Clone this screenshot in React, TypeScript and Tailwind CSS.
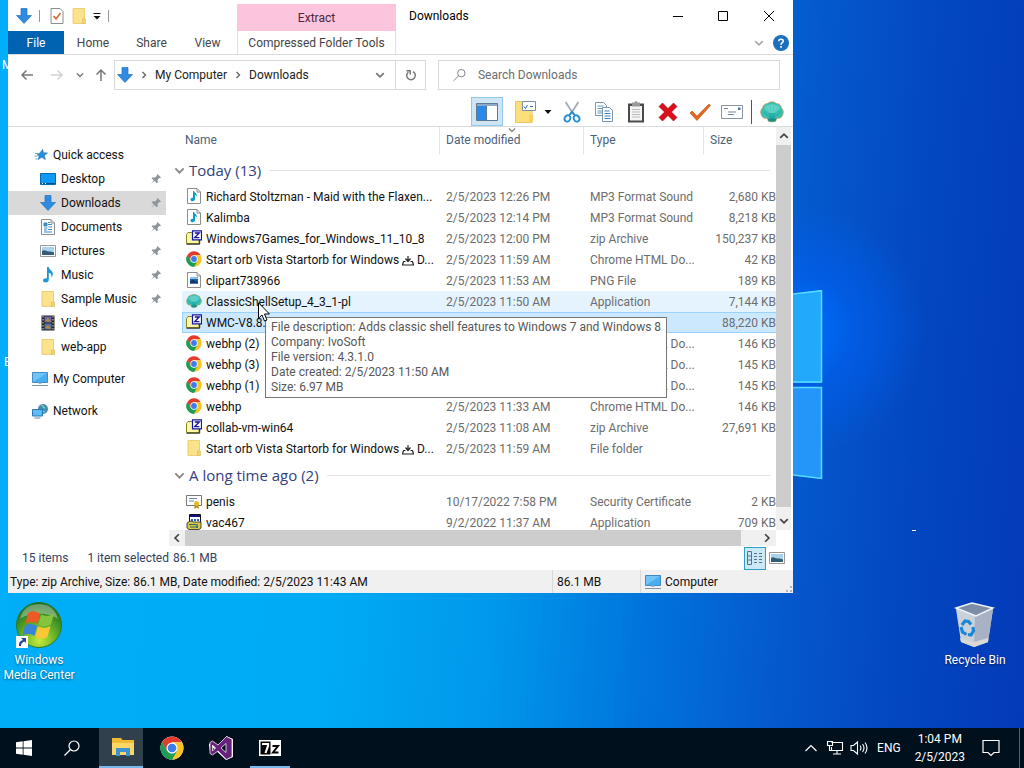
import type { ReactNode } from "react";

type IconProps = { className?: string };

function DownArrow({ className = "size-4" }: IconProps) {
  return (
    <svg viewBox="0 0 16 16" className={className}>
      <path d="M5 .5h6v7h4.5L8 15.5.5 7.5H5z" fill="#2f8be0" stroke="#2374c4" strokeWidth=".7" />
    </svg>
  );
}

function Folder({ className = "size-4" }: IconProps) {
  return (
    <svg viewBox="0 0 16 16" className={className}>
      <path d="M2 .5h11.5v15H2z" fill="#fbe28c" stroke="#e8c765" strokeWidth=".8" />
      <path d="M11.5 11h3v4.5h-3z" fill="#f5d472" stroke="#dcb85a" strokeWidth=".6" />
    </svg>
  );
}

function Chrome({ className = "size-4" }: IconProps) {
  return (
    <svg viewBox="0 0 48 48" className={className}>
      <circle cx="24" cy="24" r="23" fill="#fff" />
      <path d="M24 24 4.1 12.5A23 23 0 0 1 43.9 12.5H24z" fill="#e33b2e" />
      <path d="M24 13h20a23 23 0 0 1-20 34l10-17z" fill="#fcc31e" />
      <path d="M4.1 12.5A23 23 0 0 0 24 47l10-17-10 5-10-5z" fill="#1f9d55" />
      <path d="M4.1 12.5 14.4 30 24 24V13z" fill="#e33b2e" />
      <path d="M4.1 12.5 14.4 30 24 35l9.6-5L24 47A23 23 0 0 1 4.1 12.5z" fill="#1f9d55" />
      <circle cx="24" cy="24" r="11" fill="#fff" />
      <circle cx="24" cy="24" r="8.7" fill="#3b7ded" />
    </svg>
  );
}

function Zip({ className = "size-4" }: IconProps) {
  return (
    <svg viewBox="0 0 16 16" className={className}>
      <path d="M.5 13.5v-9l1.500-2h4l1 2h6v9z" fill="#fbf7a8" stroke="#8a8420" />
      <path d="M.5 14.2h13.2V8" fill="none" stroke="#222" />
      <path d="M6.500.8h9v9h-9z" fill="#fff" stroke="#1414a0" strokeWidth="1.200" />
      <path d="M8.800 3h4.400L8.800 7.600h4.600" fill="none" stroke="#1414a0" strokeWidth="1.400" />
    </svg>
  );
}

function Note({ className = "size-4" }: IconProps) {
  return (
    <svg viewBox="0 0 16 16" className={className}>
      <path d="M7 0h1.800c.4 3 4 3.600 4 7 0 1.600-.6 2.600-1.300 3.400C11.800 7.500 10.500 6 8.800 5.800V12.500c0 1.800-1.400 3-3.200 3S3 14.600 3 13.300s1.500-2.500 4-2z" fill="#1e96d8" />
    </svg>
  );
}

function Page({ children }: { children?: ReactNode }) {
  return (
    <svg viewBox="0 0 16 16" className="size-4">
      <path d="M1.500.5H11L14.500 4v11.500h-13z" fill="#fff" stroke="#8c8c8c" />
      <path d="M11 .5V4h3.500" fill="none" stroke="#8c8c8c" />
      {children}
    </svg>
  );
}

const Mp3 = () => (
  <Page>
    <path d="M7 3h1c.3 2 3.300 2.400 3 5.600-.4-1-1.200-1.600-2-1.700v4.200c0 1.300-1 2.200-2.300 2.200s-2.200-.8-2.200-1.800S5.500 9.600 7 9.800z" fill="#0a9cc4" />
  </Page>
);

const Png = () => (
  <Page>
    <path d="M4 5.500h8v6H4z" fill="#1e5fa8" />
    <path d="M4 11.500v-2l3-2 5 3v1z" fill="#123a6e" />
    <path d="M4 5.500h8v1.500H4z" fill="#8cc4ee" />
  </Page>
);

const Doc = () => (
  <Page>
    <path d="M4 4h3v3H4zM8 5.500h4M8 3.500h2M4 9h3.500M8.500 8h3.500M4 11h3M8 10.500h4M4 13h8" fill="#3c8ac0" stroke="#3c8ac0" />
  </Page>
);

function Shell({ className = "size-4" }: IconProps) {
  return (
    <svg viewBox="0 0 24 24" className={className}>
      <path d="M8 18.500 3.500 18C0 15 0 10 2.500 8 3 5 5.500 3.500 7.500 3.500c2.500-2.200 6.500-2.200 9 0 2 0 4.500 1.500 5 4.500 2.500 2 2.500 7-1 10l-4.500.500v2.500l-4 1-4-1z" fill="#35c0b6" stroke="#d99a55" strokeWidth=".8" />
      <path d="m11.500 19-8-7M11.500 19l-5-12M11.500 19l-1.500-14M12.500 19l1.500-14M12.500 19l5-12M12.500 19l8-7" stroke="#1a938b" strokeWidth=".6" />
      <path d="M4 8c3-5 13-5 16 0l-5 5H9z" fill="#8ee8de" opacity=".5" />
      <path d="M7 18.500h10l-2 3H9z" fill="#159188" />
    </svg>
  );
}

function Monitor({ className = "size-4" }: IconProps) {
  return (
    <svg viewBox="0 0 16 16" className={className}>
      <path d="M.5 1.500h15v10H.5z" fill="#48aef0" stroke="#2a79b8" strokeWidth=".8" />
      <path d="M1 2h14L1 11z" fill="#86cdf8" opacity=".7" />
      <path d="M6.500 11.500h3v1.500h-3z" fill="#9cb6c8" />
      <path d="M0 14.500h16" stroke="#7f98a8" />
    </svg>
  );
}

function Certificate() {
  return (
    <svg viewBox="0 0 16 16" className="size-4">
      <path d="M.5 2.500h15v10H.5z" fill="#fff" stroke="#777" />
      <path d="M3 5.500h8M3 8h5" stroke="#6889b8" />
      <path d="m9 11-1 5 2.500-1.500L13 16l-1-5z" fill="#b08a10" />
      <circle cx="10.500" cy="10.500" r="2.500" fill="#e5bd23" />
    </svg>
  );
}

function Installer() {
  return (
    <svg viewBox="0 0 16 16" className="size-4">
      <path d="M3.500.5h11v9h-11z" fill="#fff" stroke="#111" />
      <path d="M4 1h10v2H4z" fill="#101080" />
      <path d="M5 5h2v2H5zM8 5h2v2H8zM11 5h2v2h-2z" fill="#2b62b8" />
      <path d="m1 9 3-2 4 1h7v6l-2 1.500H3L1 14z" fill="#d8c94a" stroke="#222" strokeWidth=".8" />
      <path d="M3 10.500h7M4 13h8M11 10v4" stroke="#30606a" strokeWidth="1.200" />
    </svg>
  );
}

function Star() {
  return (
    <svg viewBox="0 0 16 16" className="size-4">
      <path d="m9.500 2.500 1 3.300 4 .2-3.200 2.500 1 4-3.500-2.200-3.600 2.200 1-3.500L4 7.500l2.500-1.300.5-.2z" fill="#2a8fd8" stroke="#1c72b4" strokeWidth=".6" />
      <path d="M2 6.500h3M1.500 9h3M2.500 12h2" stroke="#5aa9e0" />
    </svg>
  );
}

function Desktop() {
  return (
    <svg viewBox="0 0 16 16" className="size-4">
      <path d="M.5 2.500h15v11H.5z" fill="#0c9af5" stroke="#0669b5" />
      <path d="M1 12.500h14" stroke="#06508c" />
      <path d="M2 12.500h1M5 12.500h1" stroke="#fff" />
    </svg>
  );
}

function Picture() {
  return (
    <svg viewBox="0 0 16 16" className="size-4">
      <path d="M.5 2.500h15v11H.5z" fill="#fff" stroke="#999" />
      <path d="M2 4h12v8H2z" fill="#a9d3ee" />
      <path d="M2 12V8c3-2 5 1 7 .5 2 0 3 0 5 1V12z" fill="#355d78" />
    </svg>
  );
}

function Film() {
  return (
    <svg viewBox="0 0 16 16" className="size-4">
      <path d="M1.500.5h13v15h-13z" fill="#222" />
      <path d="M3 1v14M13 1v14" stroke="#ddd" strokeDasharray="1.500 1.500" />
      <path d="M4.500 1.500h7v6h-7z" fill="#6d6ab0" />
      <path d="M4.500 8.500h7v6h-7z" fill="#5577a5" />
      <path d="m5 6 3-3 3 4zM5 13l3-3 3 4z" fill="#b98a3a" />
    </svg>
  );
}

function NetworkIcon() {
  return (
    <svg viewBox="0 0 16 16" className="size-4">
      <circle cx="11" cy="6" r="5" fill="#3f8fb8" />
      <path d="M9 2c3 0 1 3 4 3M8 7l5 2" stroke="#9ad4a8" strokeWidth="1.200" fill="none" />
      <path d="M.5 6.500h10v6.500H.5z" fill="#5fbcf3" stroke="#2a79b8" />
      <path d="M2.500 15h6" stroke="#6b8aa0" />
    </svg>
  );
}

function Pin() {
  return (
    <svg viewBox="0 0 12 12" className="size-3">
      <path d="M7.500 1 11 4.500l-1 .7-.8-.2L7.500 7l.3 2.300-1 1-2.300-2.300L1 11.200l2.900-3.800L1.700 5.200l1-1 2.300.3L7 2.800l-.2-.9z" fill="#8d959c" />
    </svg>
  );
}

function Chevron({ className = "size-2" }: IconProps) {
  return (
    <svg viewBox="0 0 8 8" className={className}>
      <path d="m1 2.500 3 3 3-3" fill="none" stroke="currentColor" strokeWidth="1.400" />
    </svg>
  );
}

const places = [
  { label: "Desktop", icon: <Desktop />, pinned: true },
  { label: "Downloads", icon: <DownArrow />, pinned: true, active: true },
  { label: "Documents", icon: <Doc />, pinned: true },
  { label: "Pictures", icon: <Picture />, pinned: true },
  { label: "Music", icon: <Note />, pinned: true },
  { label: "Sample Music", icon: <Folder />, pinned: true },
  { label: "Videos", icon: <Film /> },
  { label: "web-app", icon: <Folder /> },
];

type FileRow = { name: ReactNode; icon: ReactNode; date: string; type: string; size?: string; state?: "hover" | "selected" };

const startOrb = (
  <>
    Start orb Vista Startorb for Windows{" "}
    <svg viewBox="0 0 12 12" className="inline size-3">
      <path d="M6 1v5M3.500 3.500 6 6.500l2.500-3M3.500 6.500H1.500l-1 3.500h11l-1-3.500h-2" fill="none" stroke="#222" strokeWidth="1.200" />
    </svg>{" "}
    D...
  </>
);

const groups: { title: string; files: FileRow[] }[] = [
  {
    title: "Today (13)",
    files: [
      { name: "Richard Stoltzman - Maid with the Flaxen...", icon: <Mp3 />, date: "2/5/2023 12:26 PM", type: "MP3 Format Sound", size: "2,680 KB" },
      { name: "Kalimba", icon: <Mp3 />, date: "2/5/2023 12:14 PM", type: "MP3 Format Sound", size: "8,218 KB" },
      { name: "Windows7Games_for_Windows_11_10_8", icon: <Zip />, date: "2/5/2023 12:00 PM", type: "zip Archive", size: "150,237 KB" },
      { name: startOrb, icon: <Chrome />, date: "2/5/2023 11:59 AM", type: "Chrome HTML Do...", size: "42 KB" },
      { name: "clipart738966", icon: <Png />, date: "2/5/2023 11:53 AM", type: "PNG File", size: "189 KB" },
      { name: "ClassicShellSetup_4_3_1-pl", icon: <Shell />, date: "2/5/2023 11:50 AM", type: "Application", size: "7,144 KB", state: "hover" },
      { name: "WMC-V8.8.", icon: <Zip />, date: "2/5/2023 11:43 AM", type: "zip Archive", size: "88,220 KB", state: "selected" },
      { name: "webhp (2)", icon: <Chrome />, date: "2/5/2023 11:37 AM", type: "Chrome HTML Do...", size: "146 KB" },
      { name: "webhp (3)", icon: <Chrome />, date: "2/5/2023 11:37 AM", type: "Chrome HTML Do...", size: "145 KB" },
      { name: "webhp (1)", icon: <Chrome />, date: "2/5/2023 11:35 AM", type: "Chrome HTML Do...", size: "145 KB" },
      { name: "webhp", icon: <Chrome />, date: "2/5/2023 11:33 AM", type: "Chrome HTML Do...", size: "146 KB" },
      { name: "collab-vm-win64", icon: <Zip />, date: "2/5/2023 11:08 AM", type: "zip Archive", size: "27,691 KB" },
      { name: startOrb, icon: <Folder />, date: "2/5/2023 11:59 AM", type: "File folder" },
    ],
  },
  {
    title: "A long time ago (2)",
    files: [
      { name: "penis", icon: <Certificate />, date: "10/17/2022 7:58 PM", type: "Security Certificate", size: "2 KB" },
      { name: "vac467", icon: <Installer />, date: "9/2/2022 11:37 AM", type: "Application", size: "709 KB" },
    ],
  },
];

const rowStyles = {
  normal: "border-transparent",
  hover: "border-transparent bg-[#e5f3ff]",
  selected: "border-[#99d1ff] bg-[#cce8ff]",
};

function TitleBar() {
  return (
    <header>
      <div className="flex h-[31px]">
        <div className="flex w-[229px] items-center pl-2">
          <DownArrow />
          <span className="ml-[7px] h-3 w-px bg-[#999]" />
          <button aria-label="Properties" className="ml-[9px]">
            <svg viewBox="0 0 16 16" className="size-4">
              <path d="M2 .5h9L14 3.500v12H2z" fill="#fff" stroke="#8c8c8c" />
              <path d="m4.500 8 2.500 3 4.500-6" fill="none" stroke="#e0672e" strokeWidth="1.600" />
            </svg>
          </button>
          <button aria-label="New folder" className="ml-[6px]"><Folder /></button>
          <button aria-label="Customize toolbar" className="ml-[6px]">
            <svg viewBox="0 0 8 8" className="size-2"><path d="M.5 1.500h7" stroke="#111" /><path d="M.5 4h7L4 7.500z" fill="#111" /></svg>
          </button>
          <span className="ml-[7px] h-3 w-px bg-[#999]" />
        </div>
        <div className="mt-1 flex w-[159px] items-center justify-center bg-[#fdc4de] pt-[2px] text-[#4c2638]">Extract</div>
        <h1 className="flex-1 self-center pt-[2px] pl-[13px] text-black">Downloads</h1>
        <button aria-label="Minimize" className="flex w-[45px] items-center justify-center"><svg viewBox="0 0 10 10" className="size-[10px]"><path d="M0 5.500h10" stroke="#000" /></svg></button>
        <button aria-label="Maximize" className="flex w-[45px] items-center justify-center"><svg viewBox="0 0 10 10" className="size-[10px]"><path d="M.5.5h9v9h-9z" fill="none" stroke="#000" /></svg></button>
        <button aria-label="Close" className="mr-px flex w-[47px] items-center justify-center"><svg viewBox="0 0 10 10" className="size-[10px]"><path d="m0 0 10 10M10 0 0 10" stroke="#000" /></svg></button>
      </div>
      <div className="flex h-6 items-stretch border-b border-[#dadbdc] text-[#444]">
        <button className="w-14 bg-[#0063b1] pt-[2px] text-white">File</button>
        <button className="w-[58px] pt-[2px]">Home</button>
        <button className="w-[59px] pt-[2px]">Share</button>
        <button className="w-[53px] pt-[2px]">View</button>
        <button className="ml-[3px] w-[159px] border-x border-[#e6dce1] pt-[2px]">Compressed Folder Tools</button>
        <span className="flex-1" />
        <button aria-label="Expand the ribbon" className="mr-[9px] text-[#aaa]"><Chevron className="size-[10px]" /></button>
        <button aria-label="Help" className="mr-1 self-center">
          <svg viewBox="0 0 16 16" className="size-4">
            <circle cx="8" cy="8" r="8" fill="#1a70bd" />
            <path d="M5.800 6.200C5.800 3.500 10.300 3.600 10.200 6.200 10.200 7.700 8 7.800 8 9.700M8 11v1.800" fill="none" stroke="#fff" strokeWidth="1.600" />
          </svg>
        </button>
      </div>
    </header>
  );
}

function AddressBar() {
  return (
    <div className="flex h-[30px] pr-[13px] text-[#222]">
      <div className="flex w-[106px] items-center text-[#777]">
        <button aria-label="Back" className="ml-3"><svg viewBox="0 0 14 14" className="size-[14px]"><path d="M13 7H2M6.500 2.500 2 7l4.500 4.500" fill="none" stroke="currentColor" strokeWidth="1.500" /></svg></button>
        <button aria-label="Forward" className="ml-4 text-[#d2d2d2]"><svg viewBox="0 0 14 14" className="size-[14px]"><path d="M1 7h11M7.500 2.500 12 7l-4.500 4.500" fill="none" stroke="currentColor" strokeWidth="1.500" /></svg></button>
        <button aria-label="Recent locations" className="ml-3"><Chevron className="size-2" /></button>
        <button aria-label="Up" className="ml-[10px]"><svg viewBox="0 0 14 14" className="size-[14px]"><path d="M7 13V2M2.500 6.500 7 2l4.500 4.500" fill="none" stroke="currentColor" strokeWidth="1.500" /></svg></button>
      </div>
      <div className="flex w-[312px] border border-[#d9d9d9]">
        <div className="flex flex-1 items-center pl-[2px]">
          <DownArrow />
          <Chevron className="mx-[7px] size-2 -rotate-90 text-[#666]" />
          <button>My Computer</button>
          <Chevron className="mx-[7px] size-2 -rotate-90 text-[#666]" />
          <button>Downloads</button>
        </div>
        <button aria-label="Previous locations" className="px-[10px] text-[#777]"><Chevron className="size-[10px]" /></button>
        <button aria-label="Refresh" className="flex w-[30px] items-center justify-center border-l border-[#d9d9d9]">
          <svg viewBox="0 0 12 12" className="size-3"><path d="M8 2.600A4.300 4.300 0 1 1 3.400 3M1.500 1.700h3.700v3.800" fill="none" stroke="#777" strokeWidth="1.500" /></svg>
        </button>
      </div>
      <label className="ml-3 flex flex-1 items-center border border-[#d9d9d9] pl-[14px]">
        <svg viewBox="0 0 14 14" className="size-[14px]"><circle cx="9" cy="5" r="4" fill="none" stroke="#777" /><path d="M6 8 .5 13.500" stroke="#777" /></svg>
        <input aria-label="Search Downloads" placeholder="Search Downloads" className="ml-3 w-full bg-transparent outline-none placeholder:text-[#6d6d6d]" />
      </label>
    </div>
  );
}

function Toolbar() {
  return (
    <div className="mt-[7px] flex h-[30px] items-center justify-end border-b border-[#dadbdc] pr-[9px]">
      <button aria-label="Navigation pane" className="flex h-full w-8 items-center justify-center border border-[#90c8ee] bg-[#cfe5f4]">
        <svg viewBox="0 0 22 18" className="h-[18px] w-[22px]">
          <path d="M.5.5h21v17H.5z" fill="#fff" stroke="#5d7894" /><path d="M1 1h20v2H1z" fill="#8da9c4" /><path d="M1 3h9v14H1z" fill="#2a8be6" /><path d="M10.500 3v14" stroke="#5d7894" />
        </svg>
      </button>
      <button aria-label="Folder options" className="ml-[6px] flex w-8 items-center justify-center">
        <svg viewBox="0 0 24 24" className="size-6">
          <path d="M2.500 1.500H19v21H2.500z" fill="#fbdf7b" stroke="#eac65a" /><path d="M16 15h4v7.500h-4z" fill="#f6d060" />
          <path d="M9.500 1.500h13v9h-13z" fill="#fff" stroke="#7a8ea5" /><path d="m11 6.500 1.500 2 2-3.500M17 6.500h3" fill="none" stroke="#3d70b0" />
        </svg>
      </button>
      <button aria-label="More options" className="mr-1 ml-[3px]"><svg viewBox="0 0 8 8" className="size-2"><path d="M.5 2h7L4 6z" fill="#111" /></svg></button>
      <button aria-label="Cut" className="flex w-8 items-center justify-center">
        <svg viewBox="0 0 24 24" className="size-[22px]">
          <path d="m5 1 9 14M19 1l-9 14" stroke="#a3adb5" strokeWidth="2" />
          <ellipse cx="7" cy="19" rx="3" ry="3.500" transform="rotate(25 7 19)" fill="none" stroke="#1f8fd4" strokeWidth="2" /><ellipse cx="17" cy="19" rx="3" ry="3.500" transform="rotate(-25 17 19)" fill="none" stroke="#1f8fd4" strokeWidth="2" />
          <path d="m8.500 16 3.500-4 3.500 4" fill="none" stroke="#1f8fd4" strokeWidth="2" />
        </svg>
      </button>
      <button aria-label="Copy" className="flex w-8 items-center justify-center">
        <svg viewBox="0 0 22 22" className="size-[22px]">
          <path d="M2.500 1.500h8l3 3v10h-11z" fill="#fff" stroke="#7f95a8" /><path d="M4.500 5h6M4.500 7.500h7M4.500 10h7M4.500 12h7" stroke="#5c9ac8" />
          <path d="M9.500 6.500h7l3 3v11h-10z" fill="#fff" stroke="#7f95a8" /><path d="M11.500 10h5M11.500 12.500h6M11.500 15h6M11.500 17.500h6" stroke="#3d86c0" />
        </svg>
      </button>
      <button aria-label="Paste" className="flex w-8 items-center justify-center">
        <svg viewBox="0 0 22 24" className="h-6 w-[22px]">
          <path d="M3 3.500h16v19H3z" fill="#4a4a4a" /><path d="M5 6h12v14.500H5z" fill="#f5f5f5" /><path d="M7 9.500h8M7 12h8M7 14.500h8M7 17h8" stroke="#bbb" /><path d="M7 2.500h2.500a1.500 1.500 0 0 1 3 0H15v4H7z" fill="#999" />
        </svg>
      </button>
      <button aria-label="Delete" className="flex w-8 items-center justify-center">
        <svg viewBox="0 0 20 20" className="size-5"><path d="m4.500 1 5.500 5.500L15.500 1 19 4.500 13.500 10l5.500 5.500-3.500 3.500-5.500-5.500L4.500 19 1 15.500 6.500 10 1 4.500z" fill="#d9101c" stroke="#a80a12" strokeWidth=".6" /></svg>
      </button>
      <button aria-label="Rename" className="flex w-8 items-center justify-center">
        <svg viewBox="0 0 24 20" className="h-5 w-6"><path d="m2 11 2-2 5 5L21 2l1.500 1.500L9 18.500z" fill="#e06a24" stroke="#c4581a" strokeWidth=".7" /></svg>
      </button>
      <button aria-label="Email" className="flex w-8 items-center justify-center">
        <svg viewBox="0 0 24 16" className="h-4 w-6"><path d="M1.500 1.500h21v13h-21z" fill="#fff" stroke="#86949f" /><path d="M4 4.500h4M8 8h8M8 10.500h6" stroke="#74899c" /><path d="M18 3.500h2.500V6H18z" fill="#4e7193" /></svg>
      </button>
      <span className="mx-[3px] h-6 w-px bg-[#555]" />
      <button aria-label="Classic shell settings" className="ml-[5px]"><Shell className="size-6" /></button>
    </div>
  );
}

function Sidebar() {
  return (
    <nav className="w-[158px] shrink-0 pt-4 text-[#111]">
      <a href="#quick" className="flex h-6 items-center gap-1 pl-[25px]"><Star />Quick access</a>
      <ul>
        {places.map((place) => (
          <li key={place.label}>
            <a href="#place" className={place.active ? "flex h-6 items-center bg-[#d9d9d9] pr-1 pl-8" : "flex h-6 items-center pr-1 pl-8"}>
              {place.icon}
              <span className="ml-[5px] flex-1">{place.label}</span>
              {place.pinned && <Pin />}
            </a>
          </li>
        ))}
      </ul>
      <a href="#computer" className="mt-2 flex h-6 items-center gap-[5px] pl-6"><Monitor />My Computer</a>
      <a href="#network" className="mt-2 flex h-6 items-center gap-[5px] pl-6"><NetworkIcon />Network</a>
    </nav>
  );
}

function FileList() {
  return (
    <div className="min-w-0 flex-1">
      <div className="flex">
        <div className="h-[403px] flex-1 overflow-hidden pl-[6px]">
          <table className="w-full table-fixed border-separate border-spacing-0 whitespace-nowrap">
            <colgroup>
              <col className="w-[10px]" />
              <col />
              <col className="w-36" />
              <col className="w-[120px]" />
              <col className="w-[72px]" />
            </colgroup>
            <thead>
              <tr className="h-[27px] text-left text-[#4c607a]">
                <td />
                <th className="border-r border-[#e5e5e5] pl-[3px] font-normal">Name</th>
                <th className="relative border-r border-[#e5e5e5] pl-[6px] font-normal">
                  <Chevron className="absolute -top-px left-[68px] size-2 text-[#888]" />
                  Date modified
                </th>
                <th className="border-r border-[#e5e5e5] pl-[6px] font-normal">Type</th>
                <th className="pl-[6px] font-normal">Size</th>
              </tr>
            </thead>
            {groups.map((group) => (
              <tbody key={group.title}>
                <tr className="h-8">
                  <th colSpan={5} className="font-normal">
                    <div className="flex items-center pr-[6px] pl-[2px] font-['Open_Sans',sans-serif] text-[15px] leading-5 text-[#33417f]">
                      <Chevron className="mr-1 size-[11px] text-[#888]" />
                      {group.title}
                      <span className="ml-2 h-px flex-1 bg-[#e2e2e2]" />
                    </div>
                  </th>
                </tr>
                {group.files.map((file, i) => {
                  const tone = rowStyles[file.state ?? "normal"];
                  return (
                    <tr key={i} className="h-[21px] text-[#6d6d6d]">
                      <td />
                      <td className={`border-y border-l pl-[3px] text-[#111] ${tone}`}>
                        <div className="flex items-start gap-1">
                          <span className="shrink-0">{file.icon}</span>
                          <span className="pt-[2px]">{file.name}</span>
                        </div>
                      </td>
                      <td className={`border-y pt-[2px] pl-[6px] ${tone}`}>{file.date}</td>
                      <td className={`border-y pt-[2px] pl-[6px] ${tone}`}>{file.type}</td>
                      <td className={`border-y pt-[2px] text-right ${tone}`}>{file.size}</td>
                    </tr>
                  );
                })}
              </tbody>
            ))}
          </table>
        </div>
        <div className="mr-[2px] flex w-[15px] flex-col items-center bg-[#f0f0f0] text-[#444]">
          <Chevron className="my-1 size-[10px] rotate-180" />
          <span className="w-full flex-1 bg-[#cdcdcd]" />
          <Chevron className="mt-[9px] mb-1 size-[10px]" />
        </div>
      </div>
      <div className="mr-[17px] ml-[3px] flex h-4 items-center bg-[#f0f0f0] text-[#444]">
        <Chevron className="mx-[3px] size-[10px] rotate-90" />
        <span className="h-full flex-1 bg-[#cdcdcd]" />
        <Chevron className="mr-1 ml-[21px] size-[10px] -rotate-90" />
      </div>
    </div>
  );
}

function ExplorerWindow() {
  return (
    <section className="absolute top-0 right-[231px] left-2 bg-white">
      <TitleBar />
      <div className="pt-[5px]">
        <AddressBar />
        <Toolbar />
      </div>
      <div className="flex">
        <Sidebar />
        <FileList />
      </div>
      <div className="flex h-6 items-center pr-2 pl-[14px] text-[#33415e]">
        <span>15 items</span>
        <span className="ml-[19px]">1 item selected</span>
        <span className="ml-1 flex-1">86.1 MB</span>
        <button aria-label="Details view" className="flex h-[23px] w-[22px] items-center justify-center border border-[#2f9fc7] bg-[#cbe8f4]">
          <svg viewBox="0 0 16 14" className="h-[14px] w-4"><path d="M.5.5h4v13h-4zM.5 5h4M.5 9h4M7 2.500h3M12 2.500h3M7 5.500h3M12 5.500h3M7 8.500h3M12 8.500h3M7 11.500h3M12 11.500h3" fill="none" stroke="#55748c" /></svg>
        </button>
        <button aria-label="Thumbnail view" className="ml-[3px]"><Picture /></button>
      </div>
      <footer className="flex h-[23px] items-stretch bg-[#f0f0f0] text-[#111]">
        <span className="flex flex-1 items-center pt-[2px] pl-[2px]">Type: zip Archive, Size: 86.1 MB, Date modified: 2/5/2023 11:43 AM</span>
        <span className="flex w-[88px] items-center border-l border-[#d9d9d9] pt-[2px] pl-1">86.1 MB</span>
        <span className="flex w-[145px] items-center gap-1 border-l border-[#d9d9d9] pl-1"><Monitor /><span className="pt-[2px]">Computer</span></span>
        <svg viewBox="0 0 8 8" className="size-2 self-end"><path d="M5 1h2v2H5zM5 5h2v2H5zM1 5h2v2H1z" fill="#b5b5b5" /></svg>
      </footer>
    </section>
  );
}

function MediaCenter() {
  return (
    <svg viewBox="0 0 48 48" className="size-12">
      <defs>
        <radialGradient id="orb" cx=".5" cy=".85" r=".8"><stop offset="0" stopColor="#c8ea3c" /><stop offset=".5" stopColor="#5fae27" /><stop offset="1" stopColor="#1c6a22" /></radialGradient>
      </defs>
      <circle cx="24" cy="24" r="22.500" fill="url(#orb)" stroke="#2c7a2a" />
      <path d="M5 18C8 6 16 3 24 3s16 3 19 15c-9-7-29-7-38 0z" fill="#fff" opacity=".35" />
      <path d="M13 12c4-3 8-2 12 .5l-2.500 10.500c-3-2-8-3-12 0z" fill="#ee5a26" />
      <path d="M26 13.500c4 2 9 2 13-1l-3 11c-4 2-8 2-12.500 0z" fill="#86c440" />
      <path d="M10 25c4-3 8-2 12 0l-2.500 10c-3-2-8-3-12 0z" fill="#3b83d6" />
      <path d="M23 25.500c4 2 9 2 12.500-.5l-3 11c-4 2-8 2-12 0z" fill="#fcc734" />
      <path d="M1 35h12v12H1z" fill="#fff" />
      <path d="M4 45c0-4 1-5 4-6l-2-2h5v5l-1.500-1.500C7 41.500 6 42.500 6 45z" fill="#2546a0" />
    </svg>
  );
}

function RecycleBin() {
  return (
    <svg viewBox="0 0 48 48" className="size-12">
      <path d="M5 8 10 41l13 5 14-5 5-33z" fill="#c9d1da" />
      <path d="m24 14 18-6-5 33-14 5z" fill="#a9b2c4" />
      <path d="m5 7 16-5 21 5-17 8z" fill="#7e8da6" stroke="#eef3f8" strokeWidth="1.400" />
      <path d="m9 37 14 4 14-4v4l-14 5-13-5z" fill="#dcd9d4" />
      <path d="m11 24 3-4 3.500.5 2.500 3M10 26l1.500 5 4 2.500M22 26l.5 4-2.500 4-3-.5" fill="none" stroke="#1c86d4" strokeWidth="3.200" />
    </svg>
  );
}

function Wallpaper() {
  return (
    <div className="absolute inset-0 bg-[linear-gradient(94deg,#00aef9_0%,#00abf5_34%,#0098eb_50%,#0074dc_64%,#0558cc_77%,#0347c0_88%,#043ab8_100%)]">
      <div className="absolute inset-0 bg-[radial-gradient(circle_at_800px_330px,#0070ff_0%,#0060f0aa_6%,transparent_14%)]" />
      <svg viewBox="0 0 30 190" className="absolute top-[290px] right-[201px] h-[190px] w-[30px]">
        <path d="M0 4 28.500 0v93H0z" fill="#22a9fb" />
        <path d="M0 97h28.500v92L0 185z" fill="#2496f9" />
        <path d="M0 4 28.500.7V92H0M0 97.500h28.500v91L0 185" fill="none" stroke="#55dcff" strokeWidth="1.500" />
      </svg>
    </div>
  );
}

function Taskbar() {
  return (
    <footer className="relative flex h-10 items-stretch bg-[#01101d] text-white">
      <button aria-label="Start" className="flex w-12 items-center justify-center">
        <svg viewBox="0 0 16 16" className="size-4"><path d="m0 2.300 6.700-1v6.300H0zM7.500 1.200 16 0v7.600H7.500zM0 8.400h6.700v6.300L0 13.700zM7.500 8.400H16V16l-8.500-1.200z" fill="#fff" /></svg>
      </button>
      <button aria-label="Search" className="flex w-12 items-center justify-center">
        <svg viewBox="0 0 16 16" className="size-4"><circle cx="10" cy="6" r="5" fill="none" stroke="#fff" strokeWidth="1.200" /><path d="M6.500 9.500.5 15.500" stroke="#fff" strokeWidth="1.200" /></svg>
      </button>
      <button aria-label="File Explorer" className="ml-[3px] flex w-11 items-center justify-center border-b-2 border-[#76b9ed] bg-[#30404c] pl-1">
        <svg viewBox="0 0 22 20" className="h-5 w-[22px]"><path d="M0 1h9l1.500 2H22v15H0z" fill="#f3b932" /><path d="M0 6h22v12H0z" fill="#fcd667" /><path d="M4 19v-8h14v8h-4v-4H8v4z" fill="#3d93d2" /></svg>
      </button>
      <button aria-label="Chrome" className="ml-[5px] flex w-12 items-center justify-center"><Chrome className="size-6" /></button>
      <button aria-label="Visual Studio" className="flex w-[50px] items-center justify-center">
        <svg viewBox="0 0 24 24" className="size-6">
          <path d="M17 0 24 3v18l-7 3L1 9l-1 6V8l2-1 15 12z" fill="#fff" />
          <path d="m17.500.5 5.500 2.800v17.400l-5.500 2.800L9 15l-5.500 4L1 17.500v-11L3.500 5 9 9zM17 7.500 12 12l5 4.500zM3.500 9v6l3-3z" fill="#68217a" fillRule="evenodd" stroke="#eee" strokeWidth=".8" />
        </svg>
      </button>
      <button aria-label="7-Zip" className="ml-1 flex w-10 items-center justify-center border-b-2 border-[#76b9ed] pt-[2px]">
        <svg viewBox="0 0 22 16" className="h-4 w-[22px]"><path d="M0 0h22v16H0z" fill="#fff" /><path d="M1.500 1.500h10v13h-10z" fill="#000" /><path d="M3 4h6v2l-2.500 7" fill="none" stroke="#fff" strokeWidth="2.200" /><path d="M13.500 6h5.500l-5 6.500h5.500" fill="none" stroke="#000" strokeWidth="2" /></svg>
      </button>
      <span className="flex-1" />
      <button aria-label="Show hidden icons"><svg viewBox="0 0 12 12" className="size-3"><path d="M.5 9 6 3.500 11.500 9" fill="none" stroke="#fff" strokeWidth="1.200" /></svg></button>
      <button aria-label="Network" className="ml-[9px]"><svg viewBox="0 0 18 16" className="h-4 w-[18px]"><path d="M5.500 2.500h11v8h-11V7M11 10.500v3M7 14h8M1.500 1.500h5v4h-5zM3.500 5.500v5h2" fill="none" stroke="#fff" strokeWidth="1.100" /></svg></button>
      <button aria-label="Volume" className="ml-[6px]"><svg viewBox="0 0 18 16" className="h-4 w-[18px]"><path d="M1 5.500h2.500L7.500 2v12l-4-3.500H1zM10 5.500q2 2.500 0 5M12.500 4q3 4 0 8M15 2.500q4 5.500 0 11" fill="none" stroke="#fff" strokeWidth="1.100" /></svg></button>
      <button className="ml-[9px]">ENG</button>
      <button className="ml-[14px] text-center leading-[18px]">1:04 PM<br />2/5/2023</button>
      <button aria-label="Notifications" className="mr-[19px] ml-[17px]"><svg viewBox="0 0 18 18" className="size-[18px]"><path d="M1 1.500h16v12h-5L9 16.500l-3-3H1z" fill="none" stroke="#fff" strokeWidth="1.200" /></svg></button>
      <span className="mr-1 w-px bg-[#56616b]" />
    </footer>
  );
}

export default function App() {
  return (
    <div className="flex h-screen flex-col overflow-hidden font-[Roboto,sans-serif] text-[12px] leading-[15px]">
      <main className="relative flex-1 overflow-hidden">
        <Wallpaper />
        <span className="absolute top-[58px] left-[2px] text-white">M</span>
        <span className="absolute top-[355px] left-1 text-white">E</span>
        <a href="#media" className="absolute top-[601px] left-0 flex w-[78px] flex-col items-center text-center text-white [text-shadow:0_1px_2px_#0008]">
          <MediaCenter />
          <span className="mt-1">Windows Media Center</span>
        </a>
        <a href="#recycle" className="absolute top-[601px] right-[10px] flex w-[78px] flex-col items-center text-center text-white [text-shadow:0_1px_2px_#0008]">
          <RecycleBin />
          <span className="mt-1">Recycle Bin</span>
        </a>
        <span className="absolute top-[530px] right-[108px] h-px w-1 bg-white" />
        <ExplorerWindow />
        <div role="tooltip" className="absolute top-[317px] left-[265px] border border-[#767676] bg-white py-[2px] pr-[5px] pl-[5px] whitespace-nowrap text-[#575757]">
          <p>File description: Adds classic shell features to Windows 7 and Windows 8</p>
          <p>Company: IvoSoft</p>
          <p>File version: 4.3.1.0</p>
          <p>Date created: 2/5/2023 11:50 AM</p>
          <p>Size: 6.97 MB</p>
        </div>
        <svg viewBox="0 0 12 20" className="absolute top-[302px] left-[258px] h-5 w-3"><path d="M.5.8v15.500L4 13l2.500 6 2.500-1-2.500-6h5z" fill="#fff" stroke="#000" /></svg>
      </main>
      <Taskbar />
    </div>
  );
}
